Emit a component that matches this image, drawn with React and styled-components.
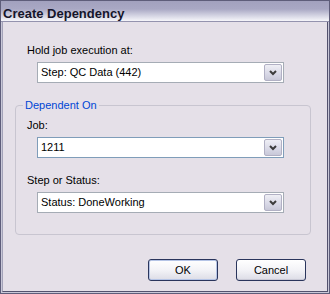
import styled, { createGlobalStyle } from "styled-components";

const GlobalStyle = createGlobalStyle`
  html, body {
    margin: 0;
    padding: 0;
    background: #e5e0e8;
  }
  * {
    box-sizing: border-box;
  }
`;

function Chevron() {
  return (
    <svg width="8" height="6" viewBox="0 0 8 6">
      <polyline
        points="1,1 4,4 7,1"
        fill="none"
        stroke="#3c3c3c"
        strokeWidth="2"
      />
    </svg>
  );
}

function Combo({ value, focused }) {
  return (
    <ComboBox $focused={focused}>
      <ComboText>{value}</ComboText>
      <DropButton>
        <Chevron />
      </DropButton>
    </ComboBox>
  );
}

export default function App() {
  return (
    <>
      <GlobalStyle />
      <Window>
        <TitleBar>Create Dependency</TitleBar>
        <Body>
          <Section>
            <Label>Hold job execution at:</Label>
            <Combo value="Step: QC Data (442)" />
          </Section>

          <Group>
            <Legend>Dependent On</Legend>
            <Label>Job:</Label>
            <Combo value="1211" focused />
            <Label $gap={16}>Step or Status:</Label>
            <Combo value="Status: DoneWorking" />
          </Group>

          <ButtonRow>
            <DialogButton $default>OK</DialogButton>
            <DialogButton>Cancel</DialogButton>
          </ButtonRow>
        </Body>
      </Window>
    </>
  );
}

const Window = styled.div`
  width: 330px;
  height: 294px;
  display: flex;
  flex-direction: column;
  background: #c9c8d8;
  border: 1px solid #5e5d7a;
  font-family: "Liberation Sans", Arial, sans-serif;
  font-size: 11px;
  color: #000;
`;

const TitleBar = styled.div`
  height: 21px;
  flex-shrink: 0;
  padding: 6px 0 0 2px;
  line-height: 14px;
  font-size: 13px;
  font-weight: bold;
  color: #15152a;
  background: linear-gradient(
    to bottom,
    #a2a1be 0%,
    #a9a8c4 40%,
    #d6d6e4 75%,
    #f6f6fa 100%
  );
  border-bottom: 1px solid #9493ae;
`;

const Body = styled.div`
  flex: 1;
  margin: 0 1px 1px 1px;
  background: #e5e0e8;
  border-left: 1px solid #a3a2b8;
  border-right: 1px solid #53526e;
  border-bottom: 1px solid #53526e;
  padding: 22px 16px 0 12px;
  display: flex;
  flex-direction: column;
`;

const Section = styled.div`
  padding-left: 12px;
  display: flex;
  flex-direction: column;
`;

const Label = styled.div`
  line-height: 13px;
  margin-top: ${(p) => p.$gap || 0}px;
`;

const ComboBox = styled.div`
  margin: 5px 0 0 10px;
  width: 247px;
  height: 21px;
  display: flex;
  align-items: center;
  background: #fff;
  border: 1px solid ${(p) => (p.$focused ? "#7f9db9" : "#a5acb5")};
`;

const ComboText = styled.div`
  flex: 1;
  padding-left: 3px;
  line-height: 13px;
  white-space: nowrap;
`;

const DropButton = styled.div`
  width: 18px;
  height: 17px;
  margin-right: 1px;
  display: flex;
  align-items: center;
  justify-content: center;
  border: 1px solid #b1b0c4;
  border-radius: 2px;
  background: linear-gradient(to bottom, #efeff5 0%, #d8d8e6 60%, #c8c8d8 100%);
`;

const Group = styled.fieldset`
  margin: 16px 0 0 0;
  min-width: 0;
  padding: 8px 0 21px 11px;
  border: 1px solid #c8c5d0;
  border-radius: 4px;
  display: flex;
  flex-direction: column;
`;

const Legend = styled.legend`
  margin-left: -4px;
  padding: 0 2px;
  line-height: 12px;
  color: #0046d5;
`;

const ButtonRow = styled.div`
  margin-top: 24px;
  padding-right: 5px;
  display: flex;
  justify-content: flex-end;
  gap: 18px;
`;

const DialogButton = styled.button`
  width: 70px;
  height: 22px;
  padding: 0;
  font-family: inherit;
  font-size: 11px;
  color: #000;
  border: 1px solid #2a355c;
  border-radius: 3px;
  background: linear-gradient(to bottom, #ffffff 0%, #f3f3f7 50%, #dcdce6 100%);
  box-shadow: ${(p) =>
    p.$default ? "inset 0 0 0 1px #b5c4e6" : "inset 0 -1px 0 #c9c9d6"};
`;
